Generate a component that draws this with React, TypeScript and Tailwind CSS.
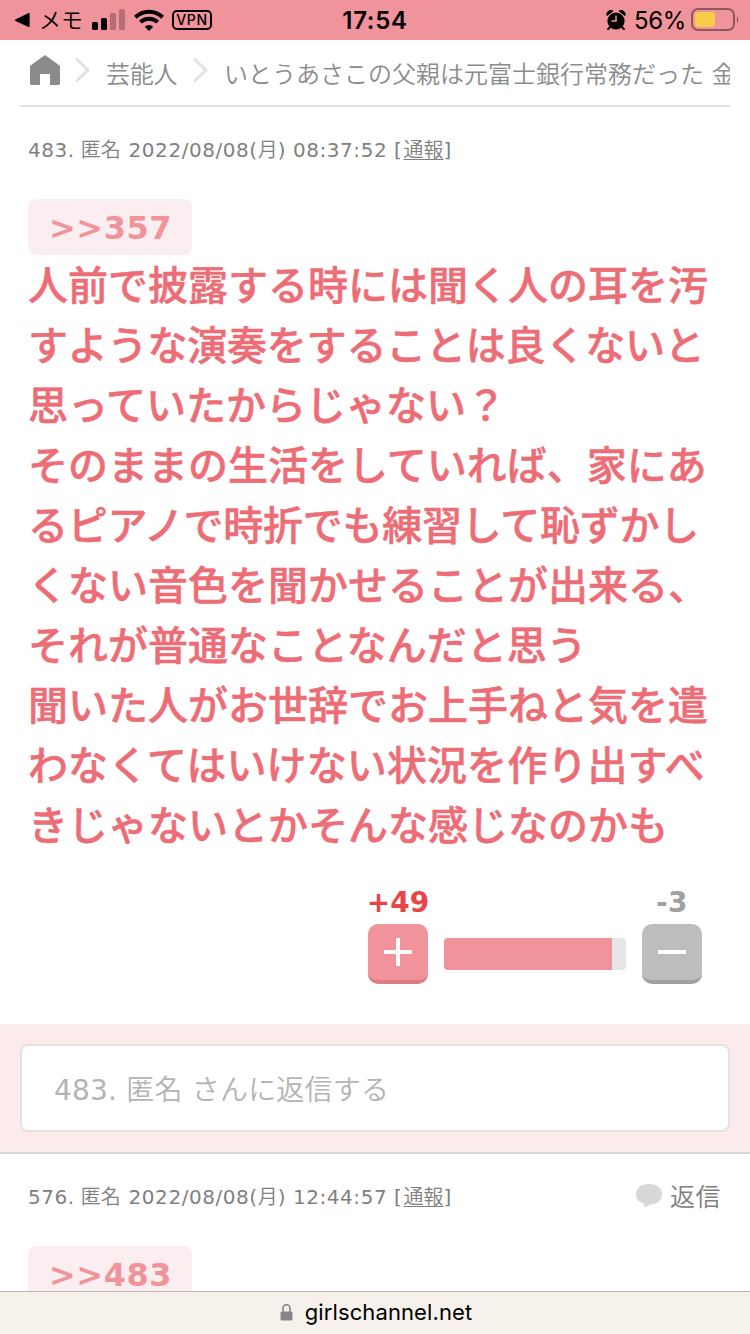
import clsx from "clsx";
import React from "react";

const bodyLines = [
  { text: "人前で披露する時には聞く人の耳を汚" },
  { text: "すような演奏をすることは良くないと", className: "tracking-[-0.2px]" },
  { text: "思っていたからじゃない？" },
  { text: "そのままの生活をしていれば、家にあ" },
  { text: "るピアノで時折でも練習して恥ずかし", className: "tracking-[-0.25px]" },
  { text: "くない音色を聞かせることが出来る、" },
  { text: "それが普通なことなんだと思う" },
  { text: "聞いた人がお世辞でお上手ねと気を遣" },
  { text: "わなくてはいけない状況を作り出すべ", className: "tracking-[0.1px]" },
  { text: "きじゃないとかそんな感じなのかも" },
];

function StatusBar() {
  return (
    <header className="flex h-10 shrink-0 items-center justify-between bg-[#f0939b] pl-[14px] pr-[11px] font-['Inter','Noto_Sans_CJK_JP',sans-serif] text-black">
      <div className="flex w-[240px] items-center">
        <svg className="h-4 w-4" viewBox="0 0 16 16">
          <path d="M15.6 1.6v12.8q0 1-1 .6L1.4 8.9q-1-.8 0-1.4L14.6 1q1-.4 1 .6z" />
        </svg>
        <span className="ml-[9px] w-[46px] whitespace-nowrap text-[22px] font-[350] leading-10">メモ</span>
        <svg className="ml-[7px] h-[22px] w-[34px]" viewBox="0 0 34 22">
          <rect x="0" y="13" width="6" height="8" rx="1.6" />
          <rect x="9" y="9" width="6" height="12" rx="1.6" />
          <rect x="18" y="4" width="6" height="17" rx="1.6" fillOpacity=".25" />
          <rect x="27" y="0" width="6" height="21" rx="1.6" fillOpacity=".25" />
        </svg>
        <svg className="ml-2 h-[22px] w-[30px]" viewBox="0 0 30 22" fill="none" stroke="#000" strokeWidth="4">
          <path d="M1.4 8.2a19.5 19.5 0 0 1 27.2 0" />
          <path d="M6.4 13.2a12.2 12.2 0 0 1 17.2 0" />
          <path d="M15 22l-4.2-4.2a6 6 0 0 1 8.4 0z" fill="#000" stroke="none" />
        </svg>
        <span className="ml-2 flex h-5 w-10 items-center justify-center rounded-[5px] border-2 border-black text-[14px] font-medium leading-none tracking-[0.6px]">
          VPN
        </span>
      </div>
      <span className="-ml-[3px] pt-0.5 text-[24px] font-semibold leading-[38px] tracking-[0.7px]">17:54</span>
      <div className="flex w-[240px] items-center justify-end">
        <svg className="mr-px h-5 w-5" viewBox="0 0 20 20">
          <circle cx="10" cy="11" r="8.6" />
          <path d="M1 5.5A4 4 0 0 1 7 1zM19 5.5A4 4 0 0 0 13 1z" stroke="#000" strokeLinejoin="round" />
          <path d="M4 17l-2 2.3M16 17l2 2.3" stroke="#000" strokeWidth="2" strokeLinecap="round" />
          <path d="M10 5.5V11H5.5" fill="none" stroke="#f0939b" strokeWidth="1.5" />
        </svg>
        <span className="ml-[7px] w-[54px] whitespace-nowrap pt-0.5 text-[24px] leading-[38px] tracking-[-0.3px]">56%</span>
        <svg className="ml-[3px] h-6 w-[48px]" viewBox="0 0 48 24">
          <rect x="1" y="1" width="42" height="21" rx="6" fill="none" stroke="#000" strokeOpacity=".4" strokeWidth="2" />
          <rect x="4" y="4" width="20" height="15" rx="3" fill="#f7cc46" />
          <path d="M46 8q2.4 3.5 0 7z" fillOpacity=".5" />
        </svg>
      </div>
    </header>
  );
}

function Chevron() {
  return (
    <svg className="mt-[-6px] h-6 w-4 shrink-0" viewBox="0 0 16 24" fill="none" stroke="#e2e2e2" strokeWidth="3" strokeLinecap="round" strokeLinejoin="round">
      <path d="M2 1.5L13 12.2 2 22.5" />
    </svg>
  );
}

function Breadcrumb() {
  return (
    <nav className="mx-5 flex h-[67px] shrink-0 items-center overflow-hidden whitespace-nowrap border-b-2 border-[#e2e2e2] pl-[10px] text-[24px] font-[350] text-[#8a8c8b]">
      <svg className="mt-[-6px] h-[30px] w-[30px] shrink-0" viewBox="0 0 30 30">
        <path d="M15 0L29.2 10.2q.8.6.8 1.6V28.5q0 1.5-1.5 1.5H20V19H10V30H1.5Q0 30 0 28.5V11.8q0-1 .8-1.6z" fill="#8a8c8b" />
      </svg>
      <div className="ml-[15px] flex">
        <Chevron />
      </div>
      <span className="ml-[15px] w-[71px] pt-[5px] tracking-[-0.3px]">芸能人</span>
      <div className="ml-4 flex">
        <Chevron />
      </div>
      <span className="ml-[15px] pt-[5px]">いとうあさこの父親は元富士銀行常務だった 金</span>
    </nav>
  );
}

function Meta({ id, time }: { id: string; time: string }) {
  return (
    <p className="h-[30px] whitespace-nowrap text-[20px] leading-[30px] tracking-[0.55px] text-[#808080]">
      {id}. <span className="-ml-px mr-px font-[350] tracking-normal">匿名</span> 2022/08/08(
      <span className="font-[350] tracking-normal">月</span>) {time} [
      <span className="ml-px font-[350] tracking-normal underline decoration-1 underline-offset-[2px]">通報</span>]
    </p>
  );
}

function Anchor({ children }: { children: React.ReactNode }) {
  return (
    <a className="flex h-14 w-[164px] items-center justify-center rounded-lg bg-[#fbeef0] pl-px pt-0.5 text-[32px] font-bold tracking-[0.5px] text-[#f0939b]">
      {children}
    </a>
  );
}

function VoteButton({ plus }: { plus?: boolean }) {
  return (
    <button
      className={clsx(
        "flex h-[60px] w-[60px] items-center justify-center rounded-[10px] border-b-4",
        plus ? "border-[#dc7d86] bg-[#f0939b]" : "border-[#a0a0a0] bg-[#bdbdbd]"
      )}
    >
      <svg className="h-7 w-7" viewBox="0 0 28 28" stroke="#fff" strokeWidth="4">
        <path d="M0 14h28" />
        {plus && <path d="M14 0v28" />}
      </svg>
    </button>
  );
}

export default function App() {
  return (
    <div className="flex h-[1334px] w-[750px] flex-col overflow-hidden bg-white font-['DejaVu_Sans','Noto_Sans_CJK_JP',sans-serif]">
      <StatusBar />
      <Breadcrumb />
      <main className="min-h-0 flex-1 overflow-hidden">
        <article className="h-[917px] px-7 pt-7">
          <Meta id="483" time="08:37:52" />
          <div className="mt-[34px]">
            <Anchor>&gt;&gt;357</Anchor>
          </div>
          <div className="-mt-0.5 font-['Noto_Sans_CJK_JP',sans-serif] text-[40px] font-medium leading-[60px] text-[#ed6d76] [-webkit-text-stroke:0.5px_#ed6d76]">
            {bodyLines.map((line) => (
              <p key={line.text} className={clsx("whitespace-nowrap", line.className)}>
                {line.text}
              </p>
            ))}
          </div>
          <div className="mt-8 flex pl-[340px] text-[28px] font-bold leading-9">
            <div className="flex w-[60px] flex-col items-center">
              <span className="mb-[3px] whitespace-nowrap text-[#e94449]">+49</span>
              <VoteButton plus />
            </div>
            <div className="mx-4 mt-[53px] flex h-8 w-[182px] overflow-hidden rounded bg-[#e6e6e6]">
              <div className="w-[168px] bg-[#f0939b]" />
            </div>
            <div className="flex w-[60px] flex-col items-center">
              <span className="mb-[3px] tracking-[0.5px] text-[#a0a0a0]">-3</span>
              <VoteButton />
            </div>
          </div>
        </article>
        <section className="h-[130px] border-b-2 border-[#d8d8d8] bg-[#fcebeb] px-5 pt-5">
          <div className="flex h-[88px] items-center rounded-lg border-2 border-[#e2e2e2] bg-white pl-8 pt-1.5 text-[28px] text-[#b4b4b4]">
            <p className="whitespace-nowrap tracking-[0.2px]">
              483. <span className="font-[350]">匿名</span> <span className="font-[350]">さんに返信する</span>
            </p>
          </div>
        </section>
        <article className="px-7 pt-7">
          <div className="flex justify-between">
            <Meta id="576" time="12:44:57" />
            <div className="flex h-[30px] items-center text-[25px] font-[350] text-[#808080]">
              <svg className="mb-1 mr-2 h-[23px] w-[26px]" viewBox="0 0 26 23">
                <path d="M13 0C5 0 0 4 0 10.3c0 4.7 3 8 8 9.500q.3 1.600-.8 3.200 4-.6 7.300-2.600C22 20.500 26 16 26 10.300 26 4 21 0 13 0z" fill="#d8d8d8" />
              </svg>
              <span className="w-[52px] whitespace-nowrap pt-0.5 tracking-[0.5px]">返信</span>
            </div>
          </div>
          <div className="mt-[34px]">
            <Anchor>&gt;&gt;483</Anchor>
          </div>
        </article>
      </main>
      <footer className="flex h-[43px] shrink-0 items-center justify-center border-t border-[#bcbab6] bg-[#f6f1ea] pl-0.5 font-['Inter',sans-serif] text-[22px] text-black">
        <svg className="mr-3 h-[18px] w-[13px]" viewBox="0 0 13 18">
          <rect x="0.5" y="7.5" width="12" height="9" rx="1.5" fill="#868484" />
          <path d="M3 8.5V4.5a3.5 3.8 0 0 1 7 0v4" fill="none" stroke="#868484" strokeWidth="1.6" />
        </svg>
        <span className="-mt-px tracking-[0.1px]">girlschannel.net</span>
      </footer>
    </div>
  );
}
